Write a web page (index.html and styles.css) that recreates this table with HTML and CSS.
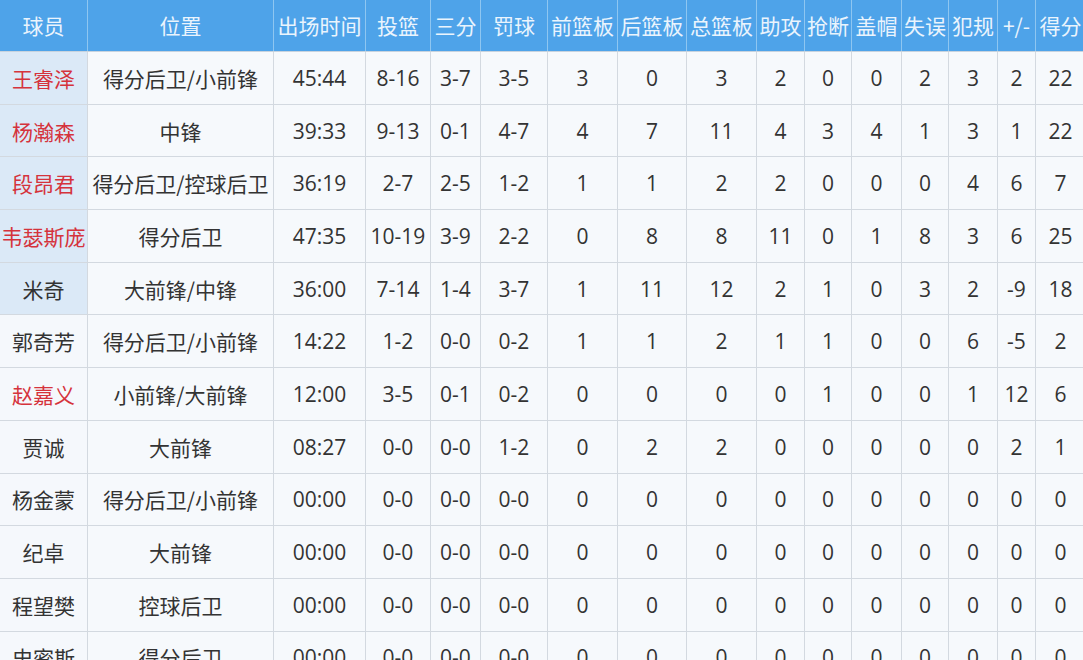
FILE: index.html
```html
<!DOCTYPE html>
<html lang="zh-CN">
<head>
<meta charset="utf-8">
<title>球员数据</title>
<link rel="stylesheet" href="styles.css">
</head>
<body>
<div class="wrap">
<table class="stats">
<colgroup>
<col class="c-name"><col class="c-pos"><col class="c-time"><col class="c-fg"><col class="c-3p"><col class="c-ft">
<col class="c-oreb"><col class="c-dreb"><col class="c-treb">
<col class="c-ast"><col class="c-stl"><col class="c-blk"><col class="c-tov"><col class="c-pf"><col class="c-pm"><col class="c-pts">
</colgroup>
<thead>
<tr><th>球员</th><th>位置</th><th>出场时间</th><th>投篮</th><th>三分</th><th>罚球</th><th>前篮板</th><th>后篮板</th><th>总篮板</th><th>助攻</th><th>抢断</th><th>盖帽</th><th>失误</th><th>犯规</th><th>+/-</th><th>得分</th></tr>
</thead>
<tbody>
<tr class="starter"><td class="name red">王睿泽</td><td>得分后卫/小前锋</td><td>45:44</td><td>8-16</td><td>3-7</td><td>3-5</td><td>3</td><td>0</td><td>3</td><td>2</td><td>0</td><td>0</td><td>2</td><td>3</td><td>2</td><td>22</td></tr>
<tr class="starter"><td class="name red">杨瀚森</td><td>中锋</td><td>39:33</td><td>9-13</td><td>0-1</td><td>4-7</td><td>4</td><td>7</td><td>11</td><td>4</td><td>3</td><td>4</td><td>1</td><td>3</td><td>1</td><td>22</td></tr>
<tr class="starter"><td class="name red">段昂君</td><td>得分后卫/控球后卫</td><td>36:19</td><td>2-7</td><td>2-5</td><td>1-2</td><td>1</td><td>1</td><td>2</td><td>2</td><td>0</td><td>0</td><td>0</td><td>4</td><td>6</td><td>7</td></tr>
<tr class="starter"><td class="name red">韦瑟斯庞</td><td>得分后卫</td><td>47:35</td><td>10-19</td><td>3-9</td><td>2-2</td><td>0</td><td>8</td><td>8</td><td>11</td><td>0</td><td>1</td><td>8</td><td>3</td><td>6</td><td>25</td></tr>
<tr class="starter"><td class="name">米奇</td><td>大前锋/中锋</td><td>36:00</td><td>7-14</td><td>1-4</td><td>3-7</td><td>1</td><td>11</td><td>12</td><td>2</td><td>1</td><td>0</td><td>3</td><td>2</td><td>-9</td><td>18</td></tr>
<tr><td class="name">郭奇芳</td><td>得分后卫/小前锋</td><td>14:22</td><td>1-2</td><td>0-0</td><td>0-2</td><td>1</td><td>1</td><td>2</td><td>1</td><td>1</td><td>0</td><td>0</td><td>6</td><td>-5</td><td>2</td></tr>
<tr><td class="name red">赵嘉义</td><td>小前锋/大前锋</td><td>12:00</td><td>3-5</td><td>0-1</td><td>0-2</td><td>0</td><td>0</td><td>0</td><td>0</td><td>1</td><td>0</td><td>0</td><td>1</td><td>12</td><td>6</td></tr>
<tr><td class="name">贾诚</td><td>大前锋</td><td>08:27</td><td>0-0</td><td>0-0</td><td>1-2</td><td>0</td><td>2</td><td>2</td><td>0</td><td>0</td><td>0</td><td>0</td><td>0</td><td>2</td><td>1</td></tr>
<tr><td class="name">杨金蒙</td><td>得分后卫/小前锋</td><td>00:00</td><td>0-0</td><td>0-0</td><td>0-0</td><td>0</td><td>0</td><td>0</td><td>0</td><td>0</td><td>0</td><td>0</td><td>0</td><td>0</td><td>0</td></tr>
<tr><td class="name">纪卓</td><td>大前锋</td><td>00:00</td><td>0-0</td><td>0-0</td><td>0-0</td><td>0</td><td>0</td><td>0</td><td>0</td><td>0</td><td>0</td><td>0</td><td>0</td><td>0</td><td>0</td></tr>
<tr><td class="name">程望樊</td><td>控球后卫</td><td>00:00</td><td>0-0</td><td>0-0</td><td>0-0</td><td>0</td><td>0</td><td>0</td><td>0</td><td>0</td><td>0</td><td>0</td><td>0</td><td>0</td><td>0</td></tr>
<tr><td class="name">史密斯</td><td>得分后卫</td><td>00:00</td><td>0-0</td><td>0-0</td><td>0-0</td><td>0</td><td>0</td><td>0</td><td>0</td><td>0</td><td>0</td><td>0</td><td>0</td><td>0</td><td>0</td></tr>
</tbody>
</table>
</div>
</body>
</html>
```

FILE: styles.css
```css
html, body {
  margin: 0;
  padding: 0;
  background: #f5f8fc;
  overflow: hidden;
}

.wrap {
  width: 1083px;
  height: 660px;
  overflow: hidden;
}

.stats {
  border-collapse: collapse;
  table-layout: fixed;
  width: 1086px;
  margin-left: -1px;
  font-family: "Open Sans", "Noto Sans CJK SC", sans-serif;
  font-size: 21px;
  color: #333;
}

.c-name { width: 88px; }
.c-pos { width: 186px; }
.c-time { width: 92px; }
.c-fg { width: 65px; }
.c-3p { width: 50px; }
.c-ft { width: 67px; }
.c-oreb { width: 70px; }
.c-dreb { width: 69px; }
.c-treb { width: 70px; }
.c-ast { width: 48px; }
.c-stl { width: 47px; }
.c-blk { width: 50px; }
.c-tov { width: 47px; }
.c-pf { width: 49px; }
.c-pm { width: 38px; }
.c-pts { width: 50px; }

.stats th {
  height: 49px;
  padding: 0 0 2px;
  background: #4ea3e9;
  color: #eaf4fd;
  font-weight: normal;
  font-family: "Noto Sans CJK SC", sans-serif;
  font-size: 21px;
  text-align: center;
  white-space: nowrap;
  overflow: hidden;
  border: 1px solid #8ec6f1;
  border-top: none;
  border-bottom: 1px solid #c8d3de;
}

.stats td {
  height: 51.7px;
  padding: 0;
  text-align: center;
  white-space: nowrap;
  background: #f6f9fc;
  border: 1px solid #d3d9e0;
}

.stats td.name {
  font-family: "Noto Sans CJK SC", sans-serif;
  background: #f5f8fc;
}

.stats tr.starter td.name {
  background: #dbe9f7;
}

.stats td:nth-child(2) {
  font-family: "Noto Sans CJK SC", sans-serif;
}

.stats td.red {
  color: #d5333c;
}
```
